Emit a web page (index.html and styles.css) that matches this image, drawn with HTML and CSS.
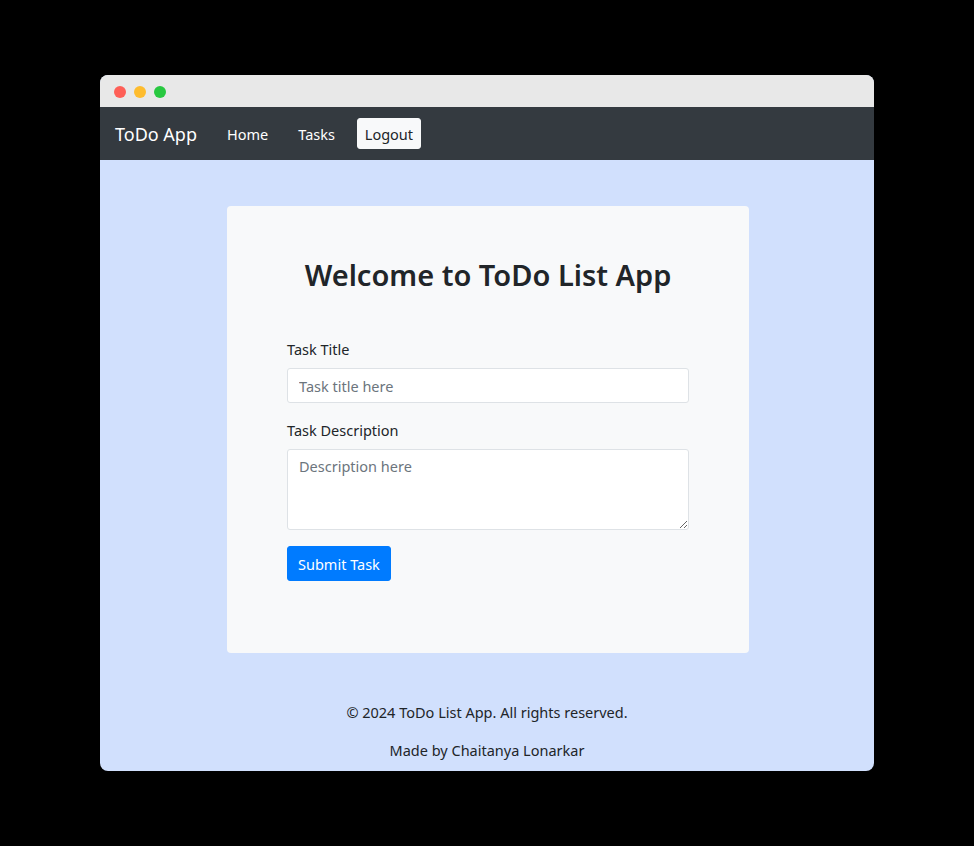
FILE: index.html
```html
<!DOCTYPE html>
<html lang="en">
<head>
<meta charset="utf-8">
<title>ToDo App</title>
<link rel="stylesheet" href="styles.css">
</head>
<body>
<div class="window">
  <div class="titlebar">
    <span class="dot red"></span><span class="dot yellow"></span><span class="dot green"></span>
  </div>
  <nav class="navbar">
    <span class="brand">ToDo App</span>
    <a class="nav-link">Home</a>
    <a class="nav-link">Tasks</a>
    <button class="logout">Logout</button>
  </nav>
  <main class="content">
    <div class="card">
      <h2 class="title">Welcome to ToDo List App</h2>
      <form class="form">
        <label class="label">Task Title</label>
        <input class="input" type="text" placeholder="Task title here">
        <label class="label">Task Description</label>
        <textarea class="input textarea" placeholder="Description here"></textarea>
        <button type="button" class="submit">Submit Task</button>
      </form>
    </div>
  </main>
  <footer class="footer">
    <p>© 2024 ToDo List App. All rights reserved.</p>
    <p>Made by Chaitanya Lonarkar</p>
  </footer>
</div>
</body>
</html>
```

FILE: styles.css
```css
html, body {
  margin: 0;
  padding: 0;
  background: #000;
}
body {
  padding: 75px 0 0 100px;
  font-family: "Noto Sans", "Open Sans", sans-serif;
  color: #212529;
}
.window {
  width: 774px;
  height: 696px;
  background: #d1e0fd;
  border-radius: 8px;
  overflow: hidden;
  display: flex;
  flex-direction: column;
}
.window > * { flex-shrink: 0; }
.titlebar {
  height: 32px;
  background: #e8e8e8;
  display: flex;
  align-items: center;
  gap: 8px;
  padding: 2px 0 0 14px;
  box-sizing: border-box;
}
.dot {
  width: 12px;
  height: 12px;
  border-radius: 50%;
  display: inline-block;
}
.red { background: #fe5f57; }
.yellow { background: #febc2e; }
.green { background: #28c840; }
.navbar {
  height: 53px;
  background: #343a40;
  display: flex;
  align-items: center;
  padding-left: 15px;
  box-sizing: border-box;
}
.brand {
  color: #fff;
  font-size: 18px;
  margin-right: 30px;
}
.nav-link {
  color: #fff;
  font-size: 14.5px;
  margin-right: 30px;
}
.nav-link + .nav-link { margin-right: 22px; }
.logout {
  font-family: inherit;
  font-size: 14.5px;
  color: #212529;
  background: #f8f9fa;
  border: 1px solid #f8f9fa;
  border-radius: 3px;
  height: 31px;
  width: 64px;
  padding: 0;
}
.content {
  display: flex;
  justify-content: center;
  padding-top: 46px;
  padding-left: 2px;
}
.card {
  width: 522px;
  height: 447px;
  box-sizing: border-box;
  background: #f8f9fa;
  border-radius: 4px;
  padding: 48px 60px 0;
}
.title {
  margin: 0 0 42px;
  text-align: center;
  font-size: 29px;
  font-weight: 600;
  line-height: 42px;
  color: #212529;
}
.form {
  display: flex;
  flex-direction: column;
  align-items: flex-start;
}
.label {
  font-size: 14.5px;
  line-height: 22px;
  margin-bottom: 8px;
}
.input {
  width: 100%;
  box-sizing: border-box;
  height: 35px;
  border: 1px solid #dee2e6;
  border-radius: 3px;
  background: #fff;
  padding: 0 11px;
  font-family: inherit;
  font-size: 14.5px;
  color: #495057;
  margin-bottom: 16px;
}
.input::placeholder { color: #6c757d; }
.textarea {
  height: 81px;
  padding-top: 6px;
  resize: vertical;
  margin-bottom: 16px;
}
.submit {
  font-family: inherit;
  font-size: 14.5px;
  color: #fff;
  background: #007bff;
  border: 1px solid #007bff;
  border-radius: 3px;
  height: 35px;
  padding: 0 10px;
}
.footer {
  text-align: center;
  font-size: 14.5px;
  color: #212529;
  padding-top: 48px;
}
.footer p {
  margin: 0 0 16px;
  line-height: 22px;
}
.footer p:last-child { margin-bottom: 0; }
```
